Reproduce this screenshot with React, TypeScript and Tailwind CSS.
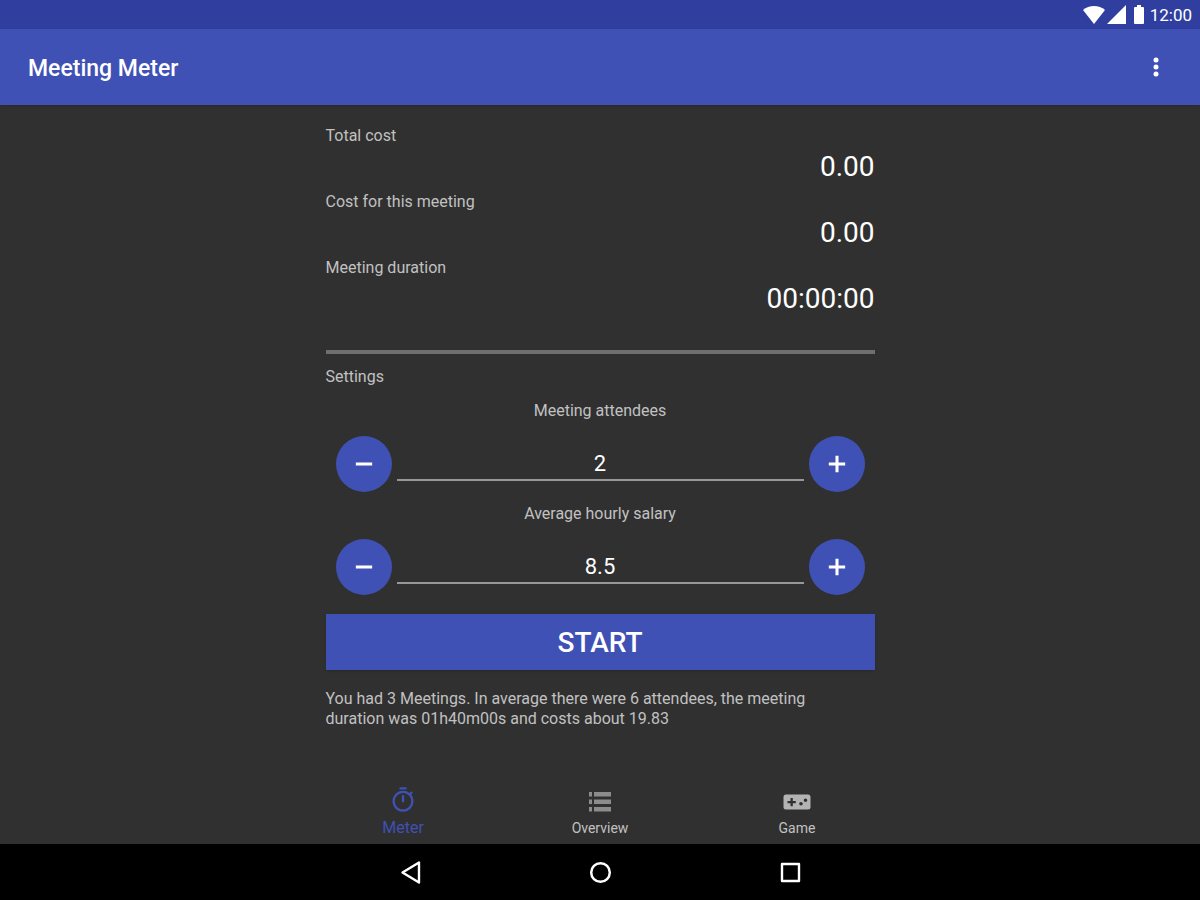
import React from "react";

const tabs = [
    { name: "Meter", icon: TimerIcon },
    { name: "Overview", icon: ListIcon },
    { name: "Game", icon: GameIcon },
];

export default function App() {
    const [attendees, setAttendees] = React.useState(2);
    const [salary, setSalary] = React.useState(8.5);
    const [active, setActive] = React.useState("Meter");

    return (
        <div className="flex min-h-screen flex-col bg-[#303030] font-['Roboto','Liberation_Sans',sans-serif] text-base leading-5 text-[#c1c1c1]">
            <StatusBar />

            <header className="flex h-[76px] items-center justify-between bg-[#3f51b5] pr-[30px] pl-7 text-white shadow-sm">
                <h1 className="pt-1 text-[23px] leading-7 font-medium">Meeting Meter</h1>
                <button type="button" aria-label="More options" className="flex h-10 w-7 items-center justify-center">
                    <svg viewBox="0 0 6 20" className="h-5 w-1.5" fill="currentColor">
                        <circle cx="3" cy="3" r="2.5" />
                        <circle cx="3" cy="10" r="2.5" />
                        <circle cx="3" cy="17" r="2.5" />
                    </svg>
                </button>
            </header>

            <main className="mx-auto flex w-full max-w-[549px] flex-1 flex-col pt-[21px]">
                <dl>
                    <Reading label="Total cost" value="0.00" />
                    <Reading label="Cost for this meeting" value="0.00" />
                    <Reading label="Meeting duration" value="00:00:00" />
                </dl>

                <hr className="mt-[26px] h-1 border-0 bg-[#6f6f6f]" />

                <h2 className="mt-[13px] mb-0.5">Settings</h2>
                <Stepper id="attendees" label="Meeting attendees" value={attendees} min={1} step={1} onChange={setAttendees} />
                <Stepper id="salary" label="Average hourly salary" value={salary} min={0} step={0.5} onChange={setSalary} />

                <button type="button" className="mt-[19px] h-14 bg-[#3f51b5] pt-0.5 text-[28px] leading-8 font-medium text-white shadow-sm">
                    START
                </button>

                <p className="mt-[19px] pr-8">
                    You had 3 Meetings. In average there were 6 attendees, the meeting duration was 01h40m00s and costs about 19.83
                </p>
            </main>

            <nav className="mx-auto grid w-full max-w-[591px] grid-cols-3">
                {tabs.map(({ name, icon: Icon }) => (
                    <button
                        key={name}
                        type="button"
                        onClick={() => setActive(name)}
                        className={`flex h-[68px] flex-col items-center justify-end ${
                            active === name ? "gap-1 pb-1.5 text-base text-[#3f51b5]" : "gap-0.5 pb-1.5 text-sm"
                        }`}
                    >
                        <Icon />
                        <span className="leading-5">{name}</span>
                    </button>
                ))}
            </nav>

            <SystemBar />
        </div>
    );
}

function Reading({ label, value }: { label: string; value: string }) {
    return (
        <div className="h-[66px]">
            <dt>{label}</dt>
            <dd className="text-right text-[28px] leading-[42px] text-white">{value}</dd>
        </div>
    );
}

type StepperProps = {
    id: string;
    label: string;
    value: number;
    min: number;
    step: number;
    onChange: (value: number) => void;
};

function Stepper({ id, label, value, min, step, onChange }: StepperProps) {
    return (
        <div className="pt-3">
            <label htmlFor={id} className="block text-center">
                {label}
            </label>
            <div className="mt-[15px] flex items-start gap-[5px] px-2.5">
                <RoundButton label={`Decrease ${label}`} onClick={() => onChange(Math.max(min, value - step))}>
                    <path d="M5 12h14" />
                </RoundButton>
                <input
                    id={id}
                    type="text"
                    inputMode="decimal"
                    value={value}
                    onChange={(e) => onChange(Number(e.target.value) || min)}
                    className="mt-2.5 h-[35px] min-w-0 flex-1 border-b-2 border-[#979797] bg-transparent pt-0.5 text-center text-[22px] text-white outline-none"
                />
                <RoundButton label={`Increase ${label}`} onClick={() => onChange(value + step)}>
                    <path d="M5 12h14M12 5v14" />
                </RoundButton>
            </div>
        </div>
    );
}

function RoundButton({ label, onClick, children }: { label: string; onClick: () => void; children: React.ReactNode }) {
    return (
        <button
            type="button"
            aria-label={label}
            onClick={onClick}
            className="flex size-14 shrink-0 items-center justify-center rounded-full bg-[#3f51b5] text-white"
        >
            <svg viewBox="0 0 24 24" className="size-7" fill="none" stroke="currentColor" strokeWidth="2.6">
                {children}
            </svg>
        </button>
    );
}

function StatusBar() {
    return (
        <div className="flex h-[29px] items-center justify-end bg-[#303f9f] pr-2 text-white">
            <svg viewBox="0 0 22 18" className="h-[18px] w-[22px]" fill="currentColor">
                <path d="M11 18 0 4.1C3 1.5 7 0 11 0s8 1.5 11 4.1z" />
            </svg>
            <svg viewBox="0 0 19 19" className="ml-0.5 size-[19px]" fill="currentColor">
                <path d="M0 19 19 0v19z" />
            </svg>
            <svg viewBox="0 0 10 19" className="ml-2 h-[19px] w-2.5" fill="currentColor">
                <path d="M3 0h4v2h2q1 0 1 1v15q0 1-1 1H1q-1 0-1-1V3q0-1 1-1h2z" />
            </svg>
            <span className="ml-1.5 text-[17px] leading-5">12:00</span>
        </div>
    );
}

function SystemBar() {
    return (
        <div className="bg-black text-white">
            <div className="mx-auto grid h-14 w-full max-w-[570px] grid-cols-3 place-items-center">
                <button type="button" aria-label="Back">
                    <svg viewBox="0 0 24 24" className="size-6" fill="none" stroke="currentColor" strokeWidth="2.4" strokeLinejoin="round">
                        <path d="M21 2.500v20L4.500 12.500z" />
                    </svg>
                </button>
                <button type="button" aria-label="Home">
                    <svg viewBox="0 0 24 24" className="size-6" fill="none" stroke="currentColor" strokeWidth="2.5">
                        <circle cx="12.5" cy="12.5" r="9.3" />
                    </svg>
                </button>
                <button type="button" aria-label="Recent apps">
                    <svg viewBox="0 0 24 24" className="size-6" fill="none" stroke="currentColor" strokeWidth="2.4" strokeLinejoin="round">
                        <path d="M4 4h17v17H4z" />
                    </svg>
                </button>
            </div>
        </div>
    );
}

function TimerIcon() {
    return (
        <svg viewBox="0 0 24 24" className="size-7" fill="currentColor">
            <path d="M15 1H9v2h6V1zm-4 13h2V8h-2v6zm8.03-6.61l1.42-1.42c-.43-.51-.9-.99-1.41-1.41l-1.42 1.42C16.07 4.74 14.12 4 12 4c-4.97 0-9 4.03-9 9s4.02 9 9 9 9-4.03 9-9c0-2.12-.74-4.07-1.97-5.61zM12 20c-3.87 0-7-3.13-7-7s3.13-7 7-7 7 3.13 7 7-3.13 7-7 7z" />
        </svg>
    );
}

function ListIcon() {
    return (
        <svg viewBox="0 0 28 28" className="size-7 text-[#8c8c8c]" fill="currentColor">
            <path d="M3 4h3v4.500H3zM8 4h17v4.500H8zM3 11.500h3V16H3zM8 11.500h17V16H8zM3 19h3v4.500H3zM8 19h17v4.500H8z" />
        </svg>
    );
}

function GameIcon() {
    return (
        <svg viewBox="0 0 28 28" className="size-7 text-[#b3b3b3]" fill="currentColor">
            <path
                fillRule="evenodd"
                d="M3 6.500h22q2.500 0 2.500 2.500v10q0 2.500-2.500 2.500H3Q.5 21.500.5 19V9Q.5 6.500 3 6.500zM7.500 10v3H4.500v2.300h3v3h2.300v-3h3V13h-3v-3zM18 14a1.800 1.800 0 1 0 0 3.600 1.800 1.800 0 0 0 0-3.600zM22.500 10.500a1.800 1.800 0 1 0 0 3.600 1.800 1.800 0 0 0 0-3.600z"
            />
        </svg>
    );
}
